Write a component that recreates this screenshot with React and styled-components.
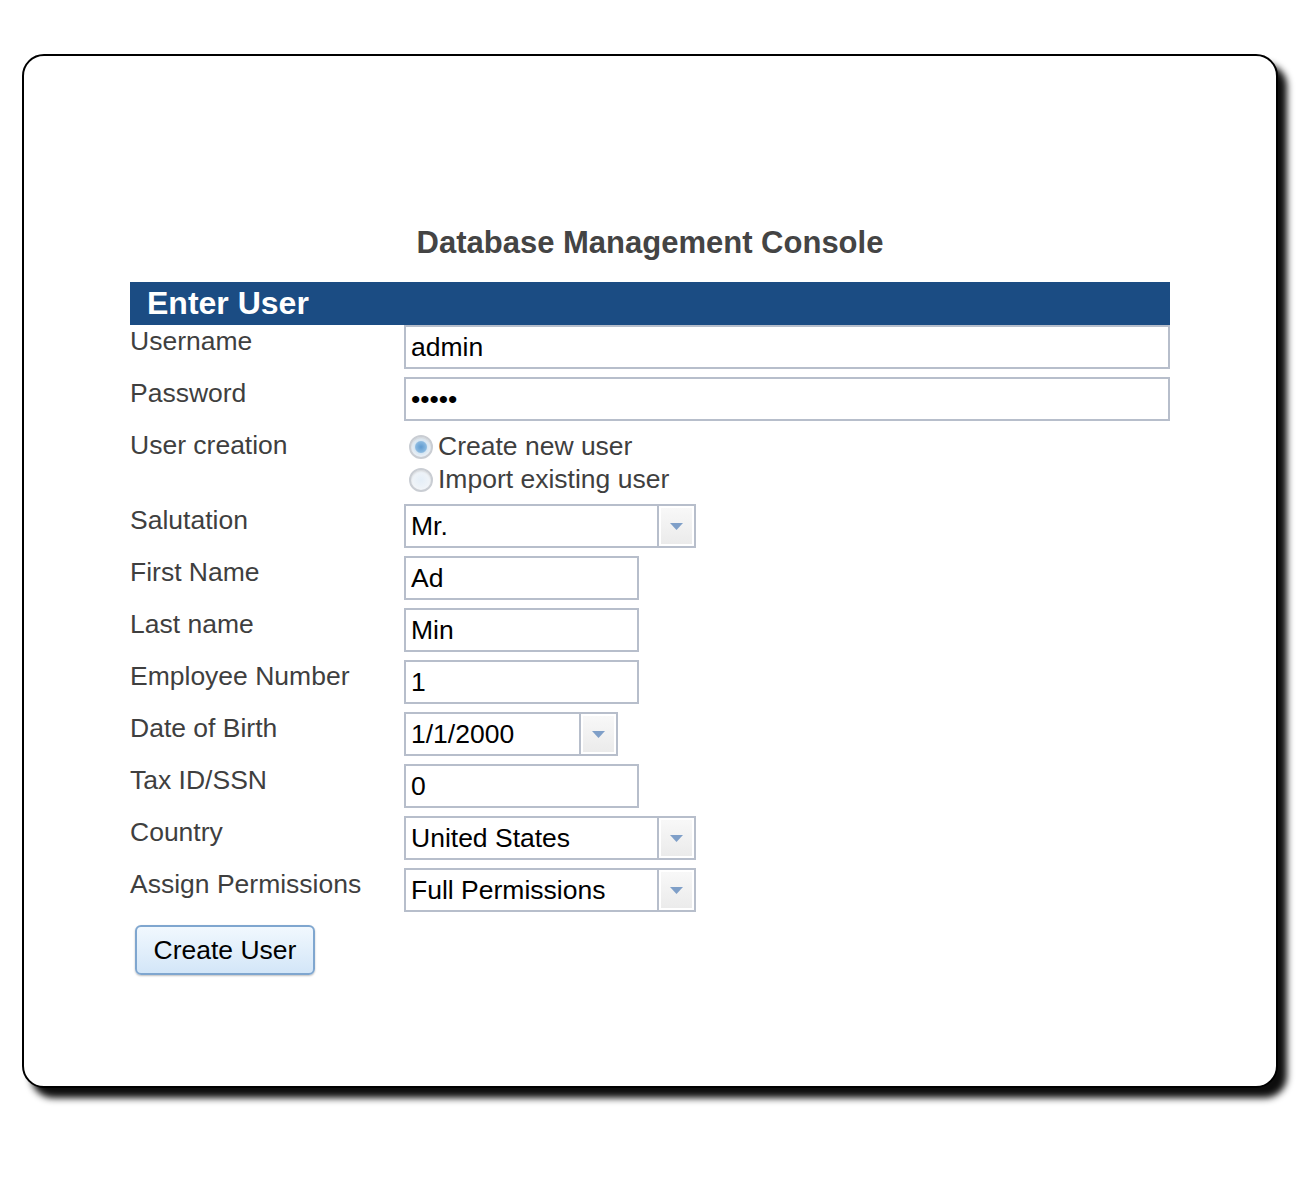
import styled, { createGlobalStyle } from "styled-components";

const GlobalStyle = createGlobalStyle`
  html, body {
    margin: 0;
    padding: 0;
    background: #fff;
    font-family: "Liberation Sans", Arial, sans-serif;
  }
`;

const Page = styled.div`
  padding: 54px 22px 0;
  height: 1190px;
  box-sizing: border-box;
`;

const Card = styled.div`
  height: 1034px;
  box-sizing: border-box;
  border: 2px solid #000;
  border-radius: 22px;
  background: #fff;
  box-shadow: 9px 10px 7px rgba(0, 0, 0, 0.95);
  padding: 169px 106px 0;
`;

const Title = styled.h1`
  margin: 0 0 21px;
  text-align: center;
  font-size: 31px;
  line-height: 36px;
  font-weight: bold;
  color: #444;
`;

const SectionBar = styled.div`
  background: #1b4c83;
  color: #fff;
  font-size: 32px;
  font-weight: bold;
  height: 43px;
  line-height: 43px;
  padding-left: 17px;
`;

const FormGrid = styled.div`
  display: grid;
  grid-template-columns: 274px 1fr;
  row-gap: 8px;
  align-items: start;
`;

const Label = styled.div`
  font-size: 26.5px;
  line-height: 33px;
  color: #3f3f3f;
  white-space: nowrap;
`;

const TextInput = styled.input`
  box-sizing: border-box;
  width: ${(p) => p.$width || "100%"};
  height: 44px;
  border: 2px solid #b7becb;
  padding: 0 5px;
  margin: 0;
  font-family: "Liberation Sans", Arial, sans-serif;
  font-size: 26.5px;
  color: #000;
  background: #fff;
  outline: none;
  border-radius: 0;
`;

const Combo = styled.div`
  box-sizing: border-box;
  width: ${(p) => p.$width};
  height: 44px;
  border: 2px solid #b7becb;
  display: flex;
  background: #fff;
`;

const ComboField = styled.input`
  flex: 1;
  min-width: 0;
  border: none;
  padding: 0 5px;
  margin: 0;
  font-family: "Liberation Sans", Arial, sans-serif;
  font-size: 26.5px;
  color: #000;
  background: transparent;
  outline: none;
`;

const ArrowCell = styled.div`
  width: 37px;
  border-left: 2px solid #b7becb;
  padding: 2px;
  box-sizing: border-box;
  display: flex;
`;

const ArrowFace = styled.div`
  flex: 1;
  background: linear-gradient(#f8f8f8, #ebebeb);
  display: flex;
  align-items: center;
  justify-content: center;
`;

const RadioGroup = styled.div`
  display: flex;
  flex-direction: column;
  padding-top: 1px;
`;

const RadioRow = styled.label`
  display: flex;
  align-items: center;
  gap: 5px;
  height: 33px;
  font-size: 26.5px;
  color: #3f3f3f;
  padding-left: 5px;
  cursor: pointer;
`;

const RadioDot = styled.span`
  width: 24px;
  height: 24px;
  border-radius: 50%;
  box-sizing: border-box;
  border: 2px solid #c9cdd3;
  background: ${(p) =>
    p.$checked
      ? "radial-gradient(circle, #5f9bd0 0, #8ab9e0 38%, #d7e6f2 46%, #eef3f8 70%)"
      : "radial-gradient(circle, #e4eef7 0, #eef3f8 55%, #f7f9fb 75%)"};
  box-shadow: inset 0 1px 2px rgba(0, 0, 0, 0.15);
  flex: none;
`;

const Actions = styled.div`
  padding: 13px 0 0 5px;
`;

const Button = styled.button`
  width: 180px;
  height: 50px;
  border: 2px solid #7fa6cf;
  border-radius: 6px;
  background: linear-gradient(#f1f8fe, #d3e6f8);
  box-shadow: 0 1px 2px rgba(0, 0, 0, 0.25);
  font-family: "Liberation Sans", Arial, sans-serif;
  font-size: 26.5px;
  color: #000;
  padding: 0;
  cursor: pointer;
`;

const Arrow = () => (
  <svg width="13" height="7" viewBox="0 0 13 7">
    <path d="M0 0 H13 L6.5 7 Z" fill="#7f9fc8" />
  </svg>
);

const ComboBox = ({ value, width }) => (
  <Combo $width={width}>
    <ComboField defaultValue={value} readOnly />
    <ArrowCell>
      <ArrowFace>
        <Arrow />
      </ArrowFace>
    </ArrowCell>
  </Combo>
);

const App = () => {
  return (
    <>
      <GlobalStyle />
      <Page>
        <Card>
          <Title>Database Management Console</Title>
          <SectionBar>Enter User</SectionBar>
          <FormGrid>
            <Label>Username</Label>
            <TextInput defaultValue="admin" />

            <Label>Password</Label>
            <TextInput type="password" defaultValue="admin" />

            <Label>User creation</Label>
            <RadioGroup>
              <RadioRow>
                <RadioDot $checked />
                Create new user
              </RadioRow>
              <RadioRow>
                <RadioDot />
                Import existing user
              </RadioRow>
            </RadioGroup>

            <Label>Salutation</Label>
            <ComboBox value="Mr." width="292px" />

            <Label>First Name</Label>
            <TextInput $width="235px" defaultValue="Ad" />

            <Label>Last name</Label>
            <TextInput $width="235px" defaultValue="Min" />

            <Label>Employee Number</Label>
            <TextInput $width="235px" defaultValue="1" />

            <Label>Date of Birth</Label>
            <ComboBox value="1/1/2000" width="214px" />

            <Label>Tax ID/SSN</Label>
            <TextInput $width="235px" defaultValue="0" />

            <Label>Country</Label>
            <ComboBox value="United States" width="292px" />

            <Label>Assign Permissions</Label>
            <ComboBox value="Full Permissions" width="292px" />
          </FormGrid>
          <Actions>
            <Button>Create User</Button>
          </Actions>
        </Card>
      </Page>
    </>
  );
};

export default App;
